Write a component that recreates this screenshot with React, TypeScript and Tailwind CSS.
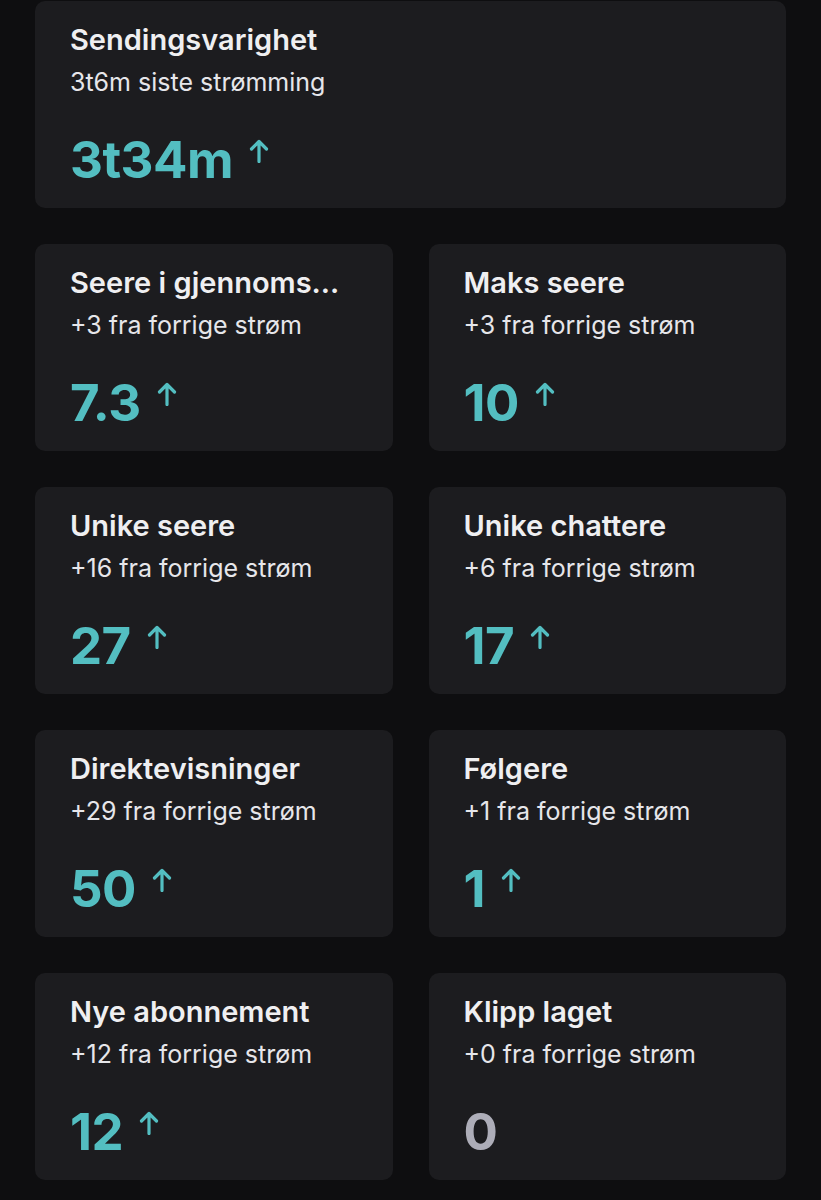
import React from "react";

interface Stat {
  title: string;
  sub: string;
  value: string;
  up: boolean;
}

const stats: Stat[] = [
  { title: "Seere i gjennoms...", sub: "+3 fra forrige strøm", value: "7.3", up: true },
  { title: "Maks seere", sub: "+3 fra forrige strøm", value: "10", up: true },
  { title: "Unike seere", sub: "+16 fra forrige strøm", value: "27", up: true },
  { title: "Unike chattere", sub: "+6 fra forrige strøm", value: "17", up: true },
  { title: "Direktevisninger", sub: "+29 fra forrige strøm", value: "50", up: true },
  { title: "Følgere", sub: "+1 fra forrige strøm", value: "1", up: true },
  { title: "Nye abonnement", sub: "+12 fra forrige strøm", value: "12", up: true },
  { title: "Klipp laget", sub: "+0 fra forrige strøm", value: "0", up: false },
];

function UpArrow() {
  return (
    <svg width="20" height="24" viewBox="0 0 20 24" fill="none" className="mt-[4px] shrink-0">
      <path
        d="M10 22.5V2.5M2.5 10 10 2.5 17.5 10"
        stroke="#53bec1"
        strokeWidth="3.2"
        strokeLinecap="round"
        strokeLinejoin="round"
      />
    </svg>
  );
}

function StatCard({ title, sub, value, up }: Stat) {
  return (
    <div className="h-[207px] rounded-[10px] bg-[#1c1c1f] pl-[35px] pr-3 pt-[19px] overflow-hidden">
      <div className="text-[29px] leading-[40px] font-semibold text-[#efeff1] whitespace-nowrap">{title}</div>
      <div className="mt-1 text-[25px] leading-[36px] text-[#e6e6ea] whitespace-nowrap">{sub}</div>
      <div className="mt-[35px] flex items-start gap-[16px]">
        <span
          className={
            "text-[51px] leading-[50px] font-bold tracking-[-0.5px] " +
            (up ? "text-[#53bec1]" : "text-[#adadb8]")
          }
        >
          {value}
        </span>
        {up && <UpArrow />}
      </div>
    </div>
  );
}

export default function App() {
  return (
    <div
      className="min-h-[1200px] bg-[#0e0e10] px-[35px] pt-[1px] pb-8"
      style={{ fontFamily: "Inter, 'Noto Sans', sans-serif" }}
    >
      <StatCard title="Sendingsvarighet" sub="3t6m siste strømming" value="3t34m" up={true} />
      <div className="mt-[36px] grid grid-cols-2 gap-x-[36px] gap-y-[36px]">
        {stats.map((s) => (
          <StatCard key={s.title} {...s} />
        ))}
      </div>
    </div>
  );
}
